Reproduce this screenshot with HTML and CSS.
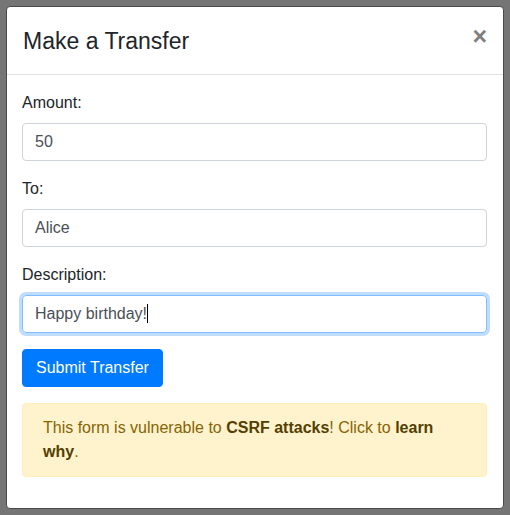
FILE: index.html
```html
<!DOCTYPE html>
<html>
<head>
<meta charset="utf-8">
<link rel="stylesheet" href="styles.css">
</head>
<body>
<div class="backdrop">
  <div class="modal">
    <div class="modal-header">
      <h4 class="modal-title">Make a Transfer</h4>
      <button class="close" type="button">&times;</button>
    </div>
    <div class="modal-body">
      <div class="form-group">
        <label class="label">Amount:</label>
        <div class="input">50</div>
      </div>
      <div class="form-group">
        <label class="label">To:</label>
        <div class="input">Alice</div>
      </div>
      <div class="form-group">
        <label class="label">Description:</label>
        <div class="input focus">Happy birthday!<span class="caret"></span></div>
      </div>
      <button class="btn" type="button">Submit Transfer</button>
      <div class="alert">This form is vulnerable to <b>CSRF attacks</b>! Click to <b>learn why</b>.</div>
    </div>
  </div>
</div>
</body>
</html>
```
FILE: styles.css
```css
* { box-sizing: border-box; }
html, body { margin: 0; padding: 0; }
body {
  background: #757575;
  font-family: "Liberation Sans", Arial, sans-serif;
  font-size: 16px;
  line-height: 1.5;
  color: #212529;
  width: 510px;
  height: 515px;
  overflow: hidden;
}
.backdrop {
  padding: 6px 6px 0 6px;
}
.modal {
  background: #fff;
  border: 1px solid #4a4a4a;
  border-radius: 4px;
  width: 498px;
  height: 503px;
  display: flex;
  flex-direction: column;
}
.modal-header {
  display: flex;
  align-items: flex-start;
  padding: 16px 16px 15px 16px;
  border-bottom: 1px solid #dee2e6;
}
.modal-title {
  margin: 0;
  font-size: 23px;
  font-weight: 500;
  line-height: 36px;
  flex: 1;
}
.close {
  background: none;
  border: 0;
  padding: 0;
  margin: 0;
  font-family: "Liberation Sans", Arial, sans-serif;
  font-size: 25px;
  font-weight: 700;
  line-height: 26px;
  color: #000;
  opacity: 0.5;
  cursor: pointer;
}
.modal-body {
  padding: 16px 16px 16px 15px;
}
.form-group { margin-bottom: 16px; }
.label {
  display: block;
  margin-bottom: 8px;
}
.input {
  height: 38px;
  padding: 6px 12px;
  border: 1px solid #ced4da;
  border-radius: 4px;
  color: #495057;
  line-height: 24px;
}
.input.focus {
  border-color: #80bdff;
  box-shadow: 0 0 0 3px rgba(0, 123, 255, 0.25);
}
.caret {
  display: inline-block;
  width: 1px;
  height: 19px;
  background: #000;
  vertical-align: -4px;
}
.btn {
  display: block;
  background: #007bff;
  color: #fff;
  border: 1px solid #007bff;
  border-radius: 4px;
  padding: 6px 13px;
  font-family: "Liberation Sans", Arial, sans-serif;
  font-size: 16px;
  line-height: 24px;
  margin: 0;
}
.alert {
  margin-top: 16px;
  padding: 12px 20px;
  background: #fff3cd;
  border: 1px solid #ffeeba;
  border-radius: 4px;
  color: #856404;
}
.alert b {
  font-weight: 700;
  color: #533f03;
}
```
